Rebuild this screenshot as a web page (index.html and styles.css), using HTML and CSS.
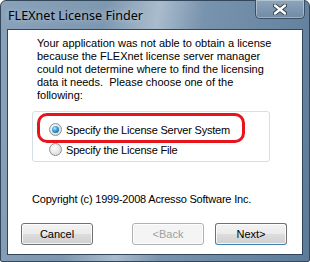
FILE: index.html
```html
<!DOCTYPE html>
<html lang="en">
<head>
    <meta charset="UTF-8">
    <title>FLEXnet License Finder</title>
    <link rel="stylesheet" href="styles.css">
</head>
<body>
    <div id="janela">
        <div class="titulo">
            <span class="tituloTxt">FLEXnet License Finder</span>
            <div class="fechar">
                <svg width="14" height="11" viewBox="0 0 14 11">
                    <path d="M2 1.5 L12 9.5 M12 1.5 L2 9.5" stroke="#2b3a48" stroke-width="4.2" stroke-linecap="round"/>
                    <path d="M2 1.5 L12 9.5 M12 1.5 L2 9.5" stroke="#ffffff" stroke-width="2.4" stroke-linecap="round"/>
                </svg>
            </div>
        </div>
        <div class="cliente">
            <p class="msg">Your application was not able to obtain a license because the FLEXnet license server manager could not determine where to find the licensing data it needs.&nbsp; Please choose one of the following:</p>
            <div class="grupo">
                <div class="opcao">
                    <span class="radio marcado"></span>
                    <span>Specify the License Server System</span>
                </div>
                <div class="opcao">
                    <span class="radio"></span>
                    <span>Specify the License File</span>
                </div>
            </div>
            <p class="copy">Copyright (c) 1999-2008 Acresso Software Inc.</p>
            <div class="botoes">
                <div class="btn">Cancel</div>
                <div class="btn desab">&lt;Back</div>
                <div class="btn padrao">Next&gt;</div>
            </div>
            <div class="destaque"></div>
        </div>
    </div>
</body>
</html>
```

FILE: styles.css
```css
*{
    margin: 0px;
    padding: 0px;
    box-sizing: border-box;
}
body{
    width: 310px;
    height: 262px;
    overflow: hidden;
    background-color: #ffffff;
}
#janela{
    width: 310px;
    height: 262px;
    border: 1px solid #33475b;
    border-radius: 6px 6px 2px 2px;
    background: linear-gradient(100deg, #8aa2b9 0%, #7d97b0 30%, #a9bccd 45%, #7893ad 58%, #5c7b99 100%);
    padding: 0px 6px 6px 6px;
    display: flex;
    flex-direction: column;
}
.titulo{
    height: 28px;
    position: relative;
    display: flex;
    align-items: center;
}
.tituloTxt{
    font-family: "Noto Sans", sans-serif;
    font-size: 12.6px;
    color: #000;
    margin-left: 1px;
    margin-top: 1px;
    text-shadow: 0 0 6px rgba(255,255,255,0.6);
}
.fechar{
    position: absolute;
    right: -2px;
    top: -1px;
    width: 50px;
    height: 19px;
    border: 1px solid #3a4f64;
    border-top: none;
    border-radius: 0 0 5px 5px;
    background: linear-gradient(#8ea5bb, #6f8aa4);
    box-shadow: inset 0 0 0 1px rgba(255,255,255,0.35);
    display: flex;
    align-items: center;
    justify-content: center;
}
.cliente{
    flex: 1;
    background-color: #fff;
    border: 1px solid #31465c;
    position: relative;
    font-family: "Liberation Sans", Arial, sans-serif;
    font-size: 11px;
    color: #000;
}
.msg{
    line-height: 13px;
    margin: 7px 20px 0px 29px;
}
.grupo{
    margin: 9px 0px 0px 24px;
    width: 238px;
    height: 51px;
    border: 1px solid #d5dfe5;
    border-radius: 3px;
    padding: 11px 0px 0px 16px;
    display: flex;
    flex-direction: column;
    gap: 7px;
    letter-spacing: -0.2px;
}
.opcao{
    display: flex;
    align-items: center;
    gap: 4px;
    height: 13px;
}
.radio{
    width: 13px;
    height: 13px;
    border-radius: 50%;
    border: 1px solid #8f8f8f;
    background: radial-gradient(circle at 40% 35%, #ffffff 0%, #e8e8e8 50%, #cfcfcf 100%);
    position: relative;
}
.marcado::after{
    content: "";
    position: absolute;
    left: 2px;
    top: 2px;
    width: 7px;
    height: 7px;
    border-radius: 50%;
    background: radial-gradient(circle at 40% 35%, #b6ecff 0%, #2f9ad6 45%, #0c4f8a 100%);
}
.copy{
    margin: 31px 0px 0px 24px;
    line-height: 13px;
    letter-spacing: -0.2px;
}
.botoes{
    display: flex;
    margin: 17px 0px 0px 13px;
}
.btn{
    width: 72px;
    height: 22px;
    border: 1px solid #707070;
    border-radius: 3px;
    background: linear-gradient(#f3f3f3 0%, #ebebeb 48%, #dddddd 52%, #cfcfcf 100%);
    box-shadow: inset 0 0 0 1px rgba(255,255,255,0.8);
    display: flex;
    align-items: center;
    justify-content: center;
    margin-right: 39px;
}
.btn + .btn{
    margin-right: 11px;
}
.desab{
    color: #a0a0a0;
    border-color: #adb2b5;
    background: #f4f4f4;
}
.padrao{
    border-color: #3c7fb1;
    border-top-color: #707070;
    border-left-color: #707070;
    border-right-color: #707070;
}
.destaque{
    position: absolute;
    left: 29px;
    top: 83px;
    width: 208px;
    height: 30px;
    border: 3px solid #e8141c;
    border-radius: 10px;
}
```
